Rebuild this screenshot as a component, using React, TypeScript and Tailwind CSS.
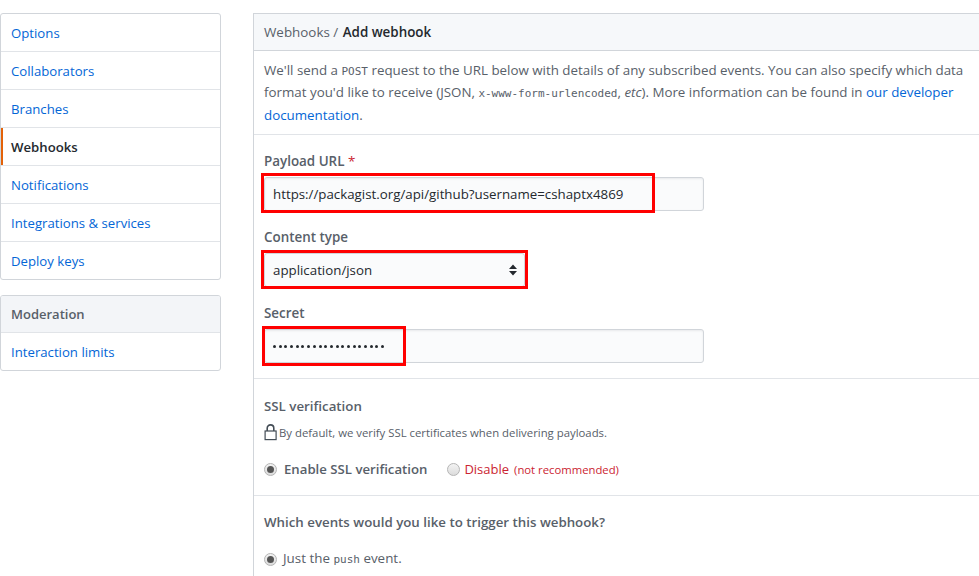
const font = { fontFamily: '"Open Sans", "Noto Sans", sans-serif' };
const mono = '[font-family:"DejaVu_Sans_Mono",monospace]';

function NavItem({ label, active, last }: { label: string; active?: boolean; last?: boolean }) {
  return (
    <div className={`relative flex items-center pl-[10px] pt-[2px] text-[13.2px] ${last ? "h-[37px]" : "h-[38px] border-b border-[#e1e4e8]"} ${active ? "font-semibold text-[#24292e]" : "text-[#0366d6]"}`}>
      {active && <span className="absolute left-0 top-0 bottom-0 w-[2px] bg-[#e36209]" />}
      {label}
    </div>
  );
}

function Radio({ checked }: { checked?: boolean }) {
  return (
    <span className="flex h-[13px] w-[13px] shrink-0 items-center justify-center rounded-full border border-[#b5b5b5] bg-[linear-gradient(#f3f3f3,#dcdcdc)]">
      {checked && <span className="h-[7px] w-[7px] rounded-full bg-[#555]" />}
    </span>
  );
}

function RedBox({ className }: { className: string }) {
  return <div className={`pointer-events-none absolute border-[3px] border-[#ff0000] ${className}`} />;
}

export default function App() {
  return (
    <div style={font} className="relative h-[576px] w-[979px] overflow-hidden bg-white text-[#586069]">
      <div className="flex items-start pt-[13px]">
        <aside className="w-[221px] shrink-0">
          <div className="overflow-hidden rounded-[3px] border border-[#d1d5da]">
            {["Options", "Collaborators", "Branches"].map((l) => <NavItem key={l} label={l} />)}
            <NavItem label="Webhooks" active />
            {["Notifications", "Integrations & services"].map((l) => <NavItem key={l} label={l} />)}
            <NavItem label="Deploy keys" last />
          </div>
          <div className="mt-[15px] overflow-hidden rounded-[3px] border border-[#d1d5da]">
            <div className="flex h-[37px] items-center border-b border-[#e1e4e8] bg-[#f3f5f8] pl-[10px] pt-[2px] text-[13px] font-semibold text-[#586069]">Moderation</div>
            <NavItem label="Interaction limits" last />
          </div>
        </aside>

        <main className="ml-[32px] h-[563px] w-[760px] shrink-0 border-l border-t border-[#d1d5da]">
          <div className="flex h-[37px] items-center border-b border-[#d1d5da] bg-[#f6f8fa] pl-[10px] text-[13.4px]">
            <span>Webhooks /&nbsp;</span>
            <strong className="ml-[1px] font-semibold text-[#24292e]">Add webhook</strong>
          </div>
          <div className="h-[84px] whitespace-nowrap border-b border-[#e1e4e8] pl-[10px] pt-[9px] text-[13.35px] leading-[21.3px]">
            <div>We'll send a <code className={`${mono} text-[11px]`}>POST</code> request to the URL below with details of any subscribed events. You can also specify which data</div>
            <div>format you'd like to receive (JSON, <code className={`${mono} text-[11px]`}>x-www-form-urlencoded</code>, <em>etc</em>). More information can be found in <span className="text-[#0366d6]">our developer</span></div>
            <div><span className="text-[#0366d6]">documentation</span>.</div>
          </div>

          <div className="h-[244px] border-b border-[#e1e4e8] pl-[10px] pt-[16px]">
            <label className="block text-[13.4px] font-semibold leading-[21px]">Payload URL <span className="font-normal text-[#cb2431]">*</span></label>
            <div className="mt-[5px] flex h-[34px] w-[440px] items-center rounded-[3px] border border-[#d1d5da] bg-[#fafbfc] pl-[8px] pt-[2px] text-[13.3px] text-[#24292e] shadow-[inset_0_1px_2px_rgba(27,31,35,0.075)]">https://packagist.org/api/github?username=cshaptx4869</div>
            <label className="mt-[16px] block text-[13.4px] font-semibold leading-[21px]">Content type</label>
            <div className="mt-[5px] flex h-[34px] w-[261px] items-center justify-between rounded-[3px] border border-[#d1d5da] bg-[#fafbfc] pl-[8px] pr-[7px] text-[13.3px] text-[#24292e]">
              <span className="pt-[2px]">application/json</span>
              <svg width="8" height="12" viewBox="0 0 8 12" fill="#24292e"><path d="M4 0.5 8 5H0zM0 7h8l-4 4.5z" /></svg>
            </div>
            <label className="mt-[16px] block text-[13.4px] font-semibold leading-[21px]">Secret</label>
            <div className="mt-[5px] flex h-[34px] w-[440px] items-center rounded-[3px] border border-[#d1d5da] bg-[#fafbfc] pl-[8px] shadow-[inset_0_1px_2px_rgba(27,31,35,0.075)]">
              <span className="flex gap-[2.7px]">
                {Array.from({ length: 20 }).map((_, i) => <span key={i} className="h-[3px] w-[3px] rounded-full bg-[#24292e]" />)}
              </span>
            </div>
          </div>

          <div className="h-[117px] border-b border-[#e1e4e8] pl-[10px] pt-[17px]">
            <div className="text-[13.3px] font-semibold leading-[21px]">SSL verification</div>
            <div className="mt-[7px] flex items-center text-[11.35px] leading-[18px]">
              <svg width="15" height="17" viewBox="0 0 15 17" fill="none" stroke="#444d56" strokeWidth="1.2" className="-mt-[2px]">
                <rect x="1.1" y="7" width="11" height="8.6" />
                <path d="M3.2 7V4.2a3.3 3.3 0 0 1 6.6 0V7" strokeWidth="1.6" />
              </svg>
              By default, we verify SSL certificates when delivering payloads.
            </div>
            <div className="mt-[17px] flex items-center text-[13.2px] leading-[21px]">
              <Radio checked />
              <span className="ml-[7px] font-semibold">Enable SSL verification</span>
              <span className="ml-[20px]"><Radio /></span>
              <span className="ml-[4px] text-[13px] text-[#cb2431]">Disable</span>
              <span className="ml-[5px] text-[11.3px] text-[#cb2431]">(not recommended)</span>
            </div>
          </div>

          <div className="pl-[10px] pt-[16px]">
            <div className="text-[13.3px] font-semibold leading-[21px]">Which events would you like to trigger this webhook?</div>
            <div className="mt-[15px] flex items-center text-[13.4px] leading-[21px]">
              <Radio checked />
              <span className="ml-[6px]">Just the <code className={`${mono} text-[11px]`}>push</code> event.</span>
            </div>
          </div>
        </main>
      </div>

      <RedBox className="left-[261px] top-[173px] h-[40px] w-[394px]" />
      <RedBox className="left-[261px] top-[250px] h-[39px] w-[267px]" />
      <RedBox className="left-[262px] top-[326px] h-[40px] w-[144px]" />
    </div>
  );
}
